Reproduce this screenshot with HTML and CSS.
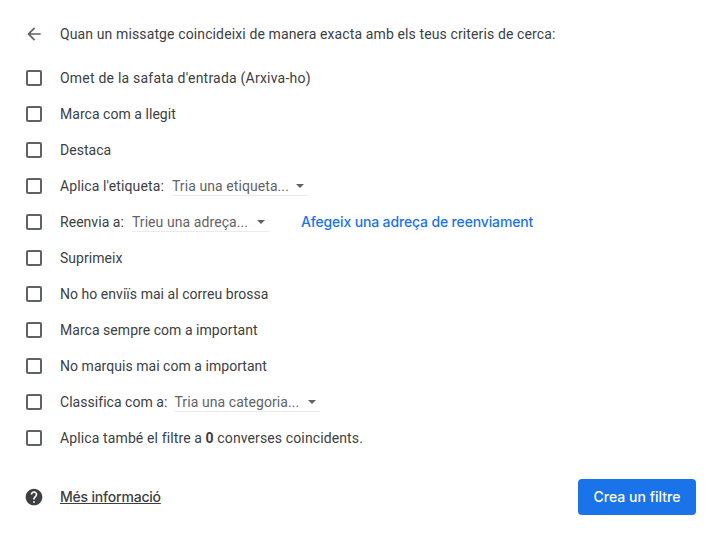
FILE: index.html
```html
<!DOCTYPE html>
<html lang="ca">
<head>
  <meta charset="UTF-8" />
  <meta name="viewport" content="width=device-width, initial-scale=1.0" />
  <title>Crea un filtre</title>
  <link rel="stylesheet" href="styles.css">
</head>
<body>
<div class="panel">
  <div class="head">
    <svg class="back" width="20" height="20" viewBox="0 0 24 24"><path d="M20 11H7.83l5.59-5.59L12 4l-8 8 8 8 1.41-1.41L7.83 13H20v-2z"/></svg>
    <span class="mid">Quan un missatge coincideixi de manera exacta amb els teus criteris de cerca:</span>
  </div>
  <div class="rows">
    <div class="row"><span class="box"></span><span class="wide">Omet de la safata d'entrada (Arxiva-ho)</span></div>
    <div class="row"><span class="box"></span><span>Marca com a llegit</span></div>
    <div class="row"><span class="box"></span><span>Destaca</span></div>
    <div class="row"><span class="box"></span><span class="mid">Aplica l'etiqueta:</span><span class="pick pick-label">Tria una etiqueta...<i class="caret"></i></span></div>
    <div class="row"><span class="box"></span><span>Reenvia a:</span><span class="pick pick-addr">Trieu una adreça...<i class="caret"></i></span><a class="add" href="#">Afegeix una adreça de reenviament</a></div>
    <div class="row"><span class="box"></span><span>Suprimeix</span></div>
    <div class="row"><span class="box"></span><span>No ho enviïs mai al correu brossa</span></div>
    <div class="row"><span class="box"></span><span>Marca sempre com a important</span></div>
    <div class="row"><span class="box"></span><span>No marquis mai com a important</span></div>
    <div class="row"><span class="box"></span><span>Classifica com a:</span><span class="pick pick-cat">Tria una categoria...<i class="caret"></i></span></div>
    <div class="row"><span class="box"></span><span class="mid">Aplica també el filtre a <b>0</b> converses coincidents.</span></div>
  </div>
  <div class="foot">
    <div class="more">
      <svg class="help" width="20" height="20" viewBox="0 0 24 24"><path d="M12 2C6.48 2 2 6.48 2 12s4.48 10 10 10 10-4.48 10-10S17.52 2 12 2zm1 17h-2v-2h2v2zm2.07-7.75-.9.92C13.45 12.9 13 13.5 13 15h-2v-.5c0-1.1.45-2.1 1.17-2.83l1.24-1.26c.37-.36.59-.86.59-1.41 0-1.1-.9-2-2-2s-2 .9-2 2H8c0-2.21 1.79-4 4-4s4 1.79 4 4c0 .88-.36 1.68-.93 2.25z"/></svg>
      <a class="more-link" href="#">Més informació</a>
    </div>
    <button class="create">Crea un filtre</button>
  </div>
</div>
</body>
</html>
```

FILE: styles.css
```css
* { box-sizing: border-box; margin: 0; padding: 0; }
html, body { width: 100%; height: 100%; background: #fff; }
body { font-family: Roboto, sans-serif; font-size: 14px; letter-spacing: .04px; color: #3c4043; overflow: hidden; }

.mid { letter-spacing: .12px; }
.wide { letter-spacing: .22px; }

.panel { padding: 16px 24px 0 24px; }

.head { display: flex; align-items: center; height: 36px; }
.back { fill: #5f6368; flex: none; margin-right: 16px; }

.rows { margin-top: 8px; }
.row { display: flex; align-items: center; height: 36px; }
.box {
  flex: none;
  width: 16px; height: 16px;
  margin: 0 18px 0 2px;
  border: 2px solid #5f6368;
  border-radius: 2px;
}

.pick {
  display: flex; align-items: center; justify-content: space-between;
  height: 20px;
  margin-left: 8px;
  color: #5f6368;
  letter-spacing: .08px;
  border-bottom: 1px solid #e8eaed;
}
.pick-label { width: 136px; }
.pick-addr { width: 137px; }
.pick-cat { width: 146px; margin-left: 7px; }
.caret {
  width: 0; height: 0;
  margin-right: 4px;
  border-left: 4px solid transparent;
  border-right: 4px solid transparent;
  border-top: 4px solid #5f6368;
}

.add {
  margin-left: 32px;
  padding-bottom: 2px;
  font-family: Inter, sans-serif;
  font-weight: 500;
  letter-spacing: -.15px;
  color: #1a73e8;
  text-decoration: none;
}

.foot {
  display: flex; align-items: center; justify-content: space-between;
  margin-top: 23px;
}
.more { display: flex; align-items: center; }
.help { fill: #3c4043; flex: none; margin-right: 16px; }
.more-link {
  padding-bottom: 2px;
  font-family: Inter, sans-serif;
  font-weight: 500;
  letter-spacing: -.2px;
  color: #3c4043;
}
.create {
  width: 118px; height: 36px;
  padding-bottom: 2px;
  background: #1a73e8;
  color: #fff;
  border: none;
  border-radius: 4px;
  font-family: Inter, sans-serif;
  font-size: 14px;
  font-weight: 500;
}
```
